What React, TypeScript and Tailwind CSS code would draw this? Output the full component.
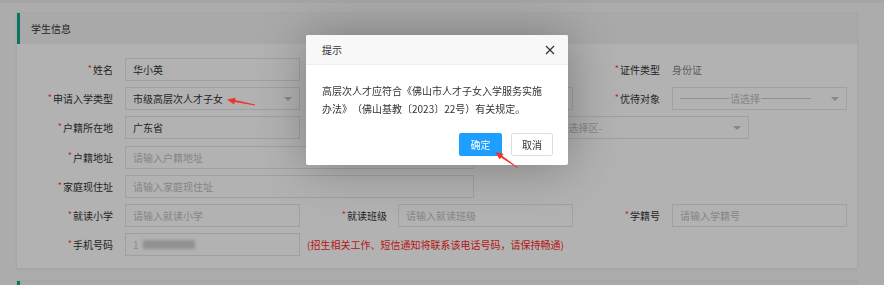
import React from 'react';

const font = { fontFamily: '"Noto Sans CJK SC", "Noto Sans", sans-serif' };

const Req = () => <span className="text-[#ff3b3b] mr-[1px] text-[9px] relative top-[-1px]">*</span>;

const Label: React.FC<{ className: string; children?: React.ReactNode }> = ({ className, children }) => (
  <div className={`shrink-0 flex items-center justify-end text-[10px] text-[#333] ${className}`}>
    {children && <Req />}
    {children}
  </div>
);

const Caret = () => (
  <span className="w-0 h-0 border-l-[4px] border-r-[4px] border-t-[4px] border-l-transparent border-r-transparent border-t-[#c2c2c2]" />
);

const Input: React.FC<{ className?: string; value?: string; placeholder?: string; select?: boolean }> = ({
  className = 'w-[175px]',
  value,
  placeholder,
  select,
}) => (
  <div
    className={`shrink-0 h-[23px] border border-[#e6e6e6] bg-white flex items-center justify-between pl-[7px] pr-[7px] text-[10px] ${className}`}
  >
    {value ? (
      <span className="text-[#333]">{value}</span>
    ) : (
      <span className="text-[#c0c0c0]">{placeholder}</span>
    )}
    {select && <Caret />}
  </div>
);

const Row: React.FC<{ children: React.ReactNode }> = ({ children }) => (
  <div className="flex items-center h-[23px]">{children}</div>
);

function arrowPoints(x1: number, y1: number, x2: number, y2: number) {
  const dx = x2 - x1;
  const dy = y2 - y1;
  const L = Math.sqrt(dx * dx + dy * dy);
  const ux = dx / L;
  const uy = dy / L;
  const nx = -uy;
  const ny = ux;
  const hl = 8;
  const hw = 3.4;
  const sw = 1.1;
  const tw = 0.4;
  const bx = x2 - ux * hl;
  const by = y2 - uy * hl;
  const p = [
    [x1 + nx * tw, y1 + ny * tw],
    [bx + nx * sw, by + ny * sw],
    [bx + nx * hw, by + ny * hw],
    [x2, y2],
    [bx - nx * hw, by - ny * hw],
    [bx - nx * sw, by - ny * sw],
    [x1 - nx * tw, y1 - ny * tw],
  ];
  return p.map((q) => q.join(',')).join(' ');
}

export default function App() {
  return (
    <div
      className="relative w-[884px] h-[285px] overflow-hidden bg-[#f7f7f7] [text-spacing-trim:space-all]"
      style={font}
    >
      <div className="h-[3px] bg-[#ededed]" />
      <div className="pt-[9px] pl-[16px] w-[858px]">
        {/* 学生信息 */}
        <div className="bg-white border border-[#eeeeee] shadow-[0_1px_2px_rgba(0,0,0,0.05)]">
          <div className="h-[31px] bg-[#f2f2f2] border-l-[3px] border-[#0fa88f] flex items-center pl-[11px] text-[10px] text-[#333]">
            学生信息
          </div>
          <div className="pt-[14px] pb-[12px] flex flex-col gap-[6.2px]">
            <Row>
              <Label className="w-[96px] mr-[12px]">姓名</Label>
              <Input value="华小英" />
              <Label className="w-[87px] mr-[11px]" />
              <span className="w-[175px]" />
              <Label className="w-[87px] mr-[12px]">证件类型</Label>
              <span className="text-[10px] text-[#888]">身份证</span>
            </Row>
            <Row>
              <Label className="w-[96px] mr-[12px]">申请入学类型</Label>
              <Input value="市级高层次人才子女" select />
              <Label className="w-[87px] mr-[11px]" />
              <Input />
              <Label className="w-[87px] mr-[12px]">优待对象</Label>
              <div className="shrink-0 w-[175px] h-[23px] border border-[#e6e6e6] bg-white flex items-center pl-[7px] pr-[7px] text-[10px] text-[#c0c0c0]">
                <span className="w-[49px] h-px bg-[#cfcfcf]" />
                <span className="px-[1px]">请选择</span>
                <span className="w-[50px] h-px bg-[#cfcfcf]" />
                <span className="flex-1" />
                <Caret />
              </div>
            </Row>
            <Row>
              <Label className="w-[96px] mr-[12px]">户籍所在地</Label>
              <Input value="广东省" />
              <Input className="w-[223px] ml-[12px]" select />
              <Input className="w-[202px] ml-[12px]" placeholder="-请选择区-" select />
            </Row>
            <Row>
              <Label className="w-[96px] mr-[12px]">户籍地址</Label>
              <Input className="w-[349px]" placeholder="请输入户籍地址" />
            </Row>
            <Row>
              <Label className="w-[96px] mr-[12px]">家庭现住址</Label>
              <Input className="w-[349px]" placeholder="请输入家庭现住址" />
            </Row>
            <Row>
              <Label className="w-[96px] mr-[12px]">就读小学</Label>
              <Input placeholder="请输入就读小学" />
              <Label className="w-[87px] mr-[11px]">就读班级</Label>
              <Input placeholder="请输入就读班级" />
              <Label className="w-[87px] mr-[12px]">学籍号</Label>
              <Input placeholder="请输入学籍号" />
            </Row>
            <Row>
              <Label className="w-[96px] mr-[12px]">手机号码</Label>
              <div className="shrink-0 w-[175px] h-[23px] border border-[#e6e6e6] bg-white flex items-center pl-[7px] text-[10px] text-[#c8c8c8]">
                <span>1</span>
                <span className="ml-[4px] h-[9px] w-[52px] bg-[#d0d0d0] blur-[1.5px]" />
              </div>
              <span className="ml-[7px] text-[10px] text-[#ff1f24]">
                (招生相关工作、短信通知将联系该电话号码，请保持畅通)
              </span>
            </Row>
          </div>
        </div>

        {/* next section header */}
        <div className="mt-[11px] bg-white border border-[#eeeeee]">
          <div className="h-[31px] bg-[#f2f2f2] border-l-[3px] border-[#0fa88f]" />
        </div>
      </div>

      {/* mask */}
      <div className="fixed inset-0 bg-black/30" />

      {/* dialog */}
      <div className="absolute left-[306px] top-[35px] w-[262px] h-[130px] bg-white rounded-[2px] shadow-[1px_1px_50px_rgba(0,0,0,0.3)] flex flex-col">
        <div className="h-[30px] shrink-0 bg-[#f8f8f8] border-b border-[#eeeeee] rounded-t-[2px] flex items-center justify-between pl-[16px] pr-[13px] text-[10px] text-[#333]">
          <span>提示</span>
          <svg width="10" height="10" viewBox="0 0 10 10">
            <path d="M1 1L9 9M9 1L1 9" stroke="#333" strokeWidth="1.2" />
          </svg>
        </div>
        <div className="pt-[17px] px-[16px] text-[10px] leading-[18px] text-[#333]">
          高层次人才应符合《佛山市人才子女入学服务实施
          <br />
          办法》（佛山基教〔2023〕22号）有关规定。
        </div>
        <div className="mt-auto mb-[9px] flex justify-end gap-[9px] pr-[15px]">
          <button className="w-[43px] h-[23px] bg-[#1e9fff] border border-[#1e9fff] rounded-[2px] text-white text-[10px]">
            确定
          </button>
          <button className="w-[42px] h-[23px] bg-white border border-[#dedede] rounded-[2px] text-[#333] text-[10px]">
            取消
          </button>
        </div>
      </div>

      {/* annotation arrows */}
      <svg className="absolute inset-0 pointer-events-none" width="884" height="285">
        <polygon points={arrowPoints(255, 105, 227, 99.5)} fill="#f2322c" />
        <polygon points={arrowPoints(518, 168, 495, 152)} fill="#f2322c" />
      </svg>
    </div>
  );
}
